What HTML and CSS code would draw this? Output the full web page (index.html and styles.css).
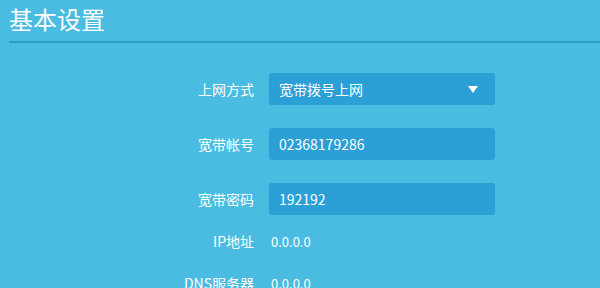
FILE: index.html
```html
<!DOCTYPE html>
<html lang="zh-CN">
<head>
  <meta charset="UTF-8" />
  <title>基本设置</title>
  <link rel="stylesheet" href="styles.css">
</head>
<body>

<div class="panel">
  <h1 class="title">基本设置</h1>

  <div class="form">
    <div class="row row-input">
      <label class="label">上网方式</label>
      <div class="field select">
        <span>宽带拨号上网</span>
        <svg class="arrow" width="10" height="7" viewBox="0 0 10 7"><path d="M0 0 L10 0 L5 7 Z" fill="#fff"/></svg>
      </div>
    </div>

    <div class="row row-input">
      <label class="label">宽带帐号</label>
      <div class="field">02368179286</div>
    </div>

    <div class="row row-input last">
      <label class="label">宽带密码</label>
      <div class="field">192192</div>
    </div>

    <div class="row row-text">
      <label class="label">IP地址</label>
      <div class="value">0.0.0.0</div>
    </div>

    <div class="row row-text">
      <label class="label">DNS服务器</label>
      <div class="value">0.0.0.0</div>
    </div>
  </div>
</div>

</body>
</html>
```

FILE: styles.css
```css
html, body {
  margin: 0;
  padding: 0;
  height: 100%;
  overflow: hidden;
  background: #4abce1;
  font-family: "Noto Sans CJK SC", "Noto Sans", sans-serif;
  color: #fff;
}

.panel {
  padding: 0 0 0 9px;
}

.title {
  margin: 0;
  padding-top: 2px;
  height: 39px;
  line-height: 34px;
  font-size: 24px;
  font-weight: normal;
  border-bottom: 2px solid #2b9dc8;
}

.form {
  padding-top: 30px;
  display: flex;
  flex-direction: column;
}

.row {
  display: flex;
  align-items: center;
  height: 32px;
}

.row-input {
  margin-bottom: 23px;
}

.row-input.last {
  margin-bottom: 10px;
}

.row-text {
  margin-bottom: 10px;
}

.label {
  width: 245px;
  padding-right: 15px;
  text-align: right;
  font-size: 14px;
}

.field {
  width: 216px;
  height: 32px;
  padding-left: 10px;
  box-sizing: content-box;
  background: #2aa0d7;
  border-radius: 3px;
  font-size: 14px;
  line-height: 32px;
  display: flex;
  align-items: center;
}

.select {
  justify-content: space-between;
}

.select .arrow {
  margin-right: 17px;
}

.value {
  font-size: 13px;
  padding-left: 2px;
}
```
